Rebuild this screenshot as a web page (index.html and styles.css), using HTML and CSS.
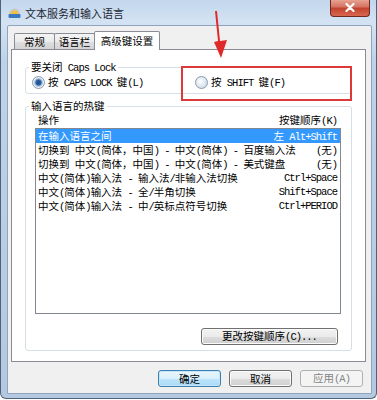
FILE: index.html
```html
<!DOCTYPE html>
<html>
<head>
  <meta charset="UTF-8" />
  <title>文本服务和输入语言</title>
  <link rel="stylesheet" href="styles.css">
</head>
<body>

<div class="window">
  <div class="titlebar">
    <!-- Icône de la fenêtre -->
    <svg class="app-icon" viewBox="0 0 13 12">
      <path d="M1 7 A5.5 5.5 0 0 1 12 7 Z" fill="#c8c8c8"/>
      <path d="M2.5 7 A4 3.6 0 0 1 10.5 7 Z" fill="#f0c040"/>
      <rect x="0.5" y="7" width="12" height="4" rx="1" fill="#3b78c0"/>
    </svg>
    <span class="title">文本服务和输入语言</span>
    <div class="close">
      <svg viewBox="0 0 10 9" width="10" height="9">
        <path d="M1.5 1 L8.5 8 M8.5 1 L1.5 8" stroke="#fff" stroke-width="2.2" stroke-linecap="round"/>
      </svg>
    </div>
  </div>

  <div class="client">
    <div class="tabs">
      <div class="tab">常规</div>
      <div class="tab">语言栏</div>
      <div class="tab active">高级键设置</div>
    </div>

    <div class="panel">
      <fieldset class="group caps">
        <legend>要关闭<span class="en"> Caps Lock</span></legend>
        <div class="radios">
          <label class="radio-row"><span class="radio checked"></span><span>按<span class="en"> CAPS LOCK </span>键<span class="en">(L)</span></span></label>
          <label class="radio-row"><span class="radio"></span><span>按<span class="en"> SHIFT </span>键<span class="en">(F)</span></span></label>
        </div>
      </fieldset>

      <fieldset class="group hotkeys">
        <legend>输入语言的热键</legend>
        <div class="list-head">
          <span>操作</span>
          <span>按键顺序<span class="en">(K)</span></span>
        </div>
        <div class="list">
          <div class="row selected"><span>在输入语言之间</span><span>左<span class="en"> Alt+Shift</span></span></div>
          <div class="row"><span>切换到<span class="en"> </span>中文<span class="en">(</span>简体，中国<span class="en">) - </span>中文<span class="en">(</span>简体<span class="en">) - </span>百度输入法</span><span><span class="en">(</span>无<span class="en">)</span></span></div>
          <div class="row"><span>切换到<span class="en"> </span>中文<span class="en">(</span>简体，中国<span class="en">) - </span>中文<span class="en">(</span>简体<span class="en">) - </span>美式键盘</span><span><span class="en">(</span>无<span class="en">)</span></span></div>
          <div class="row"><span>中文<span class="en">(</span>简体<span class="en">)</span>输入法<span class="en"> - </span>输入法<span class="en">/</span>非输入法切换</span><span class="en">Ctrl+Space</span></div>
          <div class="row"><span>中文<span class="en">(</span>简体<span class="en">)</span>输入法<span class="en"> - </span>全<span class="en">/</span>半角切换</span><span class="en">Shift+Space</span></div>
          <div class="row"><span>中文<span class="en">(</span>简体<span class="en">)</span>输入法<span class="en"> - </span>中<span class="en">/</span>英标点符号切换</span><span class="en">Ctrl+PERIOD</span></div>
        </div>
        <div class="change-row">
          <button class="btn btn-change">更改按键顺序<span class="en">(C)...</span></button>
        </div>
      </fieldset>
    </div>

    <div class="footer">
      <button class="btn btn-ok">确定</button>
      <button class="btn">取消</button>
      <button class="btn" disabled>应用<span class="en">(A)</span></button>
    </div>
  </div>

  <!-- Annotations rouges par-dessus la fenêtre -->
  <div class="highlight"></div>
  <svg class="arrow" viewBox="0 0 30 60" width="30" height="60">
    <polygon points="9,6 11,6 14,36 21,35 15,53 8,37 12,36" fill="#e02a2a"/>
  </svg>
</div>

</body>
</html>
```

FILE: styles.css
```css
* {
  box-sizing: border-box;
}

html, body {
  margin: 0;
  padding: 0;
  background: #fff;
}

body {
  font-family: "Noto Sans CJK SC", sans-serif;
  font-size: 10.5px;
  line-height: 14px;
  color: #000;
  width: 377px;
  height: 400px;
  overflow: hidden;
}

.en {
  font-family: "Liberation Mono", monospace;
  letter-spacing: -1px;
}

.window {
  position: relative;
  width: 377px;
  height: 399px;
  padding: 0 4px 0 6px;
  border: 1px solid #4f6378;
  border-top: none;
  border-radius: 0 0 6px 6px;
  background: linear-gradient(to bottom, #c2d6ec 0, #d4e3f3 22px, #bfd2e8 60px, #b4c8df 100%);
}

/* Barre de titre */
.titlebar {
  display: flex;
  align-items: center;
  height: 25px;
}

.app-icon {
  width: 13px;
  height: 12px;
  margin-left: 1px;
  margin-top: 1px;
}

.title {
  margin-left: 4px;
  font-size: 11px;
  color: #1b2633;
}

.close {
  margin-left: auto;
  margin-right: 2px;
  align-self: flex-start;
  width: 40px;
  height: 18px;
  margin-top: -1px;
  display: flex;
  align-items: center;
  justify-content: center;
  border: 1px solid #6e2a22;
  border-top: none;
  border-radius: 0 0 4px 4px;
  background: linear-gradient(#eaa898, #d67563 45%, #c2432f 55%, #d8674f);
}

/* Zone cliente */
.client {
  height: 369px;
  display: flex;
  flex-direction: column;
  background: #f0f0f0;
  border: 1px solid #8fa5bd;
  border-radius: 2px 2px 0 0;
}

.tabs {
  position: relative;
  z-index: 1;
  display: flex;
  align-items: flex-end;
  height: 23px;
  padding-left: 6px;
}

.tab {
  width: 41px;
  height: 16px;
  line-height: 15px;
  text-align: center;
  border: 1px solid #898c95;
  border-bottom: none;
  border-radius: 2px 2px 0 0;
  background: linear-gradient(#f4f4f4, #ebebeb 50%, #dfdfdf 51%, #d3d3d3);
}

.tab + .tab {
  margin-left: -1px;
}

.tab.active {
  width: 66px;
  height: 19px;
  line-height: 17px;
  margin-bottom: -1px;
  background: #fff;
}

.panel {
  height: 313px;
  margin: 0 5px 0 3px;
  padding: 10px 13px 0 13px;
  background: #fff;
  border: 1px solid #898c95;
}

/* Cadres de groupe */
.group {
  margin: 0;
  padding: 0;
  border: 1px solid #d5dfe5;
  border-radius: 3px;
}

.group legend {
  margin-left: 3px;
  padding: 0 2px;
  line-height: 14px;
}

.radios {
  display: grid;
  grid-template-columns: 163px 1fr;
  padding: 0 0 4px 6px;
}

.radio-row {
  display: flex;
  align-items: center;
  height: 14px;
}

.radio {
  width: 13px;
  height: 13px;
  margin-right: 3px;
  border-radius: 50%;
  border: 1px solid #8a99ab;
  background: radial-gradient(circle at 40% 40%, #ffffff, #d3dfeb 70%, #c2d2e3);
}

.radio.checked {
  background: radial-gradient(circle at 50% 50%, #1f4e8c 0, #2c5f9e 2.5px, #8fb0d6 3.5px, #eef3f8 5px, #d3dfeb);
}

.hotkeys {
  margin-top: 5px;
}

.list-head {
  display: flex;
  justify-content: space-between;
  height: 15px;
  line-height: 14px;
  margin: 0 10px 0 9px;
  padding: 0 4px 0 3px;
}

.list {
  height: 186px;
  margin: 0 10px 0 9px;
  background: #fff;
  border: 1px solid #828790;
}

.row {
  display: flex;
  justify-content: space-between;
  height: 14px;
  line-height: 14px;
  padding: 0 3px 0 2px;
  white-space: nowrap;
}

.row.selected {
  background: #3399ff;
  color: #fff;
}

.change-row {
  display: flex;
  justify-content: flex-end;
  padding: 14px 13px 5px 0;
}

/* Boutons */
.btn {
  height: 17px;
  width: 63px;
  padding: 0;
  font-family: inherit;
  font-size: 10.5px;
  line-height: 14px;
  color: #000;
  border: 1px solid #707070;
  border-radius: 3px;
  background: linear-gradient(#f2f2f2 0, #ebebeb 50%, #dddddd 51%, #cfcfcf 100%);
  box-shadow: inset 0 0 0 1px #fbfbfb;
}

.btn-change {
  width: 137px;
}

.btn-ok {
  border-color: #3c7fb1;
  background: linear-gradient(#eaf6fd 0, #d9f0fc 50%, #bee6fd 51%, #a7d9f5 100%);
  box-shadow: inset 0 0 0 1px #c4e6f8;
}

.btn:disabled {
  color: #838383;
  border-color: #adb2b5;
  background: #f4f4f4;
  box-shadow: none;
}

.footer {
  display: flex;
  justify-content: flex-end;
  gap: 8px;
  padding: 8px 8px 0 0;
}

/* Annotations */
.highlight {
  position: absolute;
  left: 180px;
  top: 66px;
  width: 171px;
  height: 35px;
  border: 2px solid #dc3a3a;
}

.arrow {
  position: absolute;
  left: 205px;
  top: 5px;
}
```
